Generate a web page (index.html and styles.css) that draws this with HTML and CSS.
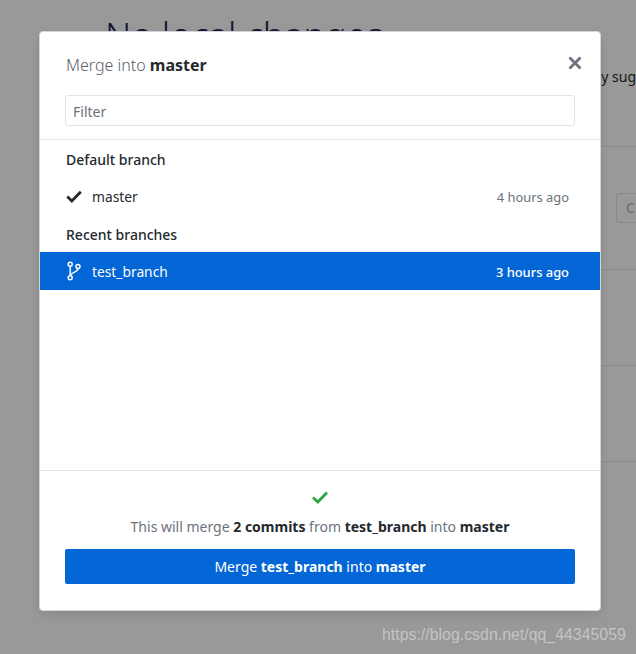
FILE: index.html
```html
<!DOCTYPE html>
<html lang="en">
<head>
  <meta charset="UTF-8" />
  <title>Merge into master</title>
  <link rel="stylesheet" href="styles.css">
</head>
<body>
  <div class="page">
    <h1 class="page-title">No local changes</h1>
    <p class="page-hint">Here are some friendly sug</p>
    <div class="page-row page-row-first"><span class="page-btn">C</span></div>
    <div class="page-row page-row-second"></div>
    <div class="page-row page-row-third"></div>
  </div>

  <div class="dialog">
    <div class="dialog-header">
      <div class="dialog-title-row">
        <h2 class="dialog-title">Merge into <strong>master</strong></h2>
        <svg class="close-icon" width="14" height="14" viewBox="0 0 14 14">
          <path d="M1.5 1.5 L12.5 12.5 M12.5 1.5 L1.5 12.5" />
        </svg>
      </div>
      <input class="filter" type="text" placeholder="Filter">
    </div>

    <div class="branches">
      <div class="group-label">Default branch</div>
      <div class="branch">
        <svg class="branch-icon" width="16" height="16" viewBox="0 0 16 16">
          <path class="check" d="M1.3 8.6 L5.8 13 L14.8 3.8" />
        </svg>
        <span class="branch-name">master</span>
        <span class="branch-time">4 hours ago</span>
      </div>
      <div class="group-label">Recent branches</div>
      <div class="branch branch-selected">
        <svg class="branch-icon" width="16" height="20" viewBox="0 0 16 20">
          <g class="fork">
            <circle cx="4.2" cy="3.2" r="2" />
            <circle cx="4.2" cy="16.8" r="2" />
            <circle cx="12" cy="5.5" r="2" />
            <path d="M4.2 5.2 V14.8 M12 7.5 C12 11.5 5.5 10.5 4.2 14.8" />
          </g>
        </svg>
        <span class="branch-name">test_branch</span>
        <span class="branch-time">3 hours ago</span>
      </div>
    </div>

    <div class="dialog-footer">
      <svg class="ok-icon" width="16" height="14" viewBox="0 0 16 14">
        <path d="M1 7.5 L5.8 12 L15 2.5" />
      </svg>
      <p class="merge-info">This will merge <strong>2 commits</strong> from <strong>test_branch</strong> into <strong>master</strong></p>
      <button class="merge-btn" type="button">Merge <strong>test_branch</strong> into <strong>master</strong></button>
    </div>
  </div>

  <div class="watermark">https://blog.csdn.net/qq_44345059</div>
</body>
</html>
```

FILE: styles.css
```css
html, body {
  margin: 0;
  height: 100%;
}
body {
  background: #999999;
  font-family: "Noto Sans", sans-serif;
  font-size: 14px;
  color: #24292e;
  overflow: hidden;
  position: relative;
}
.page {
  padding: 16px 0 0 105px;
  color: #14171a;
}
.page-title {
  margin: 0;
  font-size: 36px;
  font-weight: 300;
  line-height: 40px;
  white-space: nowrap;
  color: #151530;
}
.page-hint {
  margin: 11px 0 0;
  font-size: 14px;
  line-height: 20px;
  text-align: right;
  white-space: nowrap;
}
.page-row {
  border-bottom: 1px solid #8a8a8a;
}
.page-row-first {
  height: 124px;
  box-sizing: border-box;
  margin-top: 59px;
  padding-top: 46px;
  border-top: 1px solid #8a8a8a;
  display: flex;
  justify-content: flex-end;
}
.page-row-second { height: 95px; }
.page-row-third { height: 95px; }
.page-btn {
  box-sizing: border-box;
  width: 20px;
  height: 30px;
  border: 1px solid #8a8a8a;
  border-right: 0;
  border-radius: 3px 0 0 3px;
  padding: 4px 0 0 9px;
  color: #6a6a6a;
}

.dialog {
  position: absolute;
  left: 39px;
  top: 31px;
  width: 562px;
  height: 580px;
  box-sizing: border-box;
  display: flex;
  flex-direction: column;
  background: #fff;
  border: 1px solid #d1d5da;
  border-radius: 4px;
  box-shadow: 0 4px 12px rgba(0, 0, 0, 0.1);
}
.dialog-header {
  padding: 21px 25px 0 26px;
  border-bottom: 1px solid #e1e4e8;
  height: 108px;
  box-sizing: border-box;
}
.dialog-title-row {
  display: flex;
  justify-content: space-between;
  align-items: center;
  height: 24px;
}
.dialog-title {
  margin: 0;
  font-size: 16px;
  font-weight: 300;
  color: #586069;
}
.dialog-title strong {
  font-weight: 700;
  color: #24292e;
}
.close-icon {
  margin-right: -7px;
  margin-top: -4px;
}
.close-icon path {
  fill: none;
  stroke: #6a737d;
  stroke-width: 2.8;
}
.filter {
  display: block;
  box-sizing: border-box;
  width: calc(100% + 1px);
  height: 31px;
  margin-top: 18px;
  margin-left: -1px;
  padding: 2px 7px 0;
  border: 1px solid #e1e4e8;
  border-radius: 3px;
  outline: none;
  font-family: inherit;
  font-size: 14px;
  color: #24292e;
}
.filter::placeholder {
  color: #6a737d;
  opacity: 1;
}
.branches {
  flex: 1;
}
.group-label {
  height: 37px;
  padding: 2px 26px 0;
  box-sizing: border-box;
  line-height: 36px;
  font-weight: 500;
}
.branch {
  display: flex;
  align-items: center;
  height: 38px;
  padding: 0 31px 0 26px;
}
.branch-icon {
  flex: none;
  margin-right: 10px;
}
.check {
  fill: none;
  stroke: #24292e;
  stroke-width: 2.8;
}
.fork circle, .fork path {
  fill: none;
  stroke: #fff;
  stroke-width: 1.5;
}
.branch-name {
  flex: 1;
  padding-top: 1px;
  font-size: 13.8px;
}
.branch-time {
  padding-top: 2px;
  font-size: 12.9px;
  color: #6a737d;
}
.branch-selected {
  background: #0366d6;
  color: #fff;
}
.branch-selected .branch-time {
  color: #fff;
  font-weight: 500;
}
.dialog-footer {
  height: 140px;
  box-sizing: border-box;
  padding: 19px 25px 0;
  border-top: 1px solid #e1e4e8;
  display: flex;
  flex-direction: column;
  align-items: center;
}
.ok-icon path {
  fill: none;
  stroke: #28a745;
  stroke-width: 2.8;
}
.merge-info {
  margin: 13px 0 0;
  line-height: 20px;
  color: #6a737d;
  white-space: nowrap;
}
.merge-info strong {
  color: #24292e;
  font-weight: 700;
}
.merge-btn {
  width: 100%;
  height: 35px;
  margin-top: 12px;
  border: none;
  border-radius: 2px;
  background: #0366d6;
  color: #fff;
  font-family: inherit;
  font-size: 14px;
}
.watermark {
  position: absolute;
  left: 382px;
  top: 626px;
  font-family: "Liberation Sans", sans-serif;
  font-size: 15.9px;
  color: #c4c4c4;
  white-space: nowrap;
}
```
